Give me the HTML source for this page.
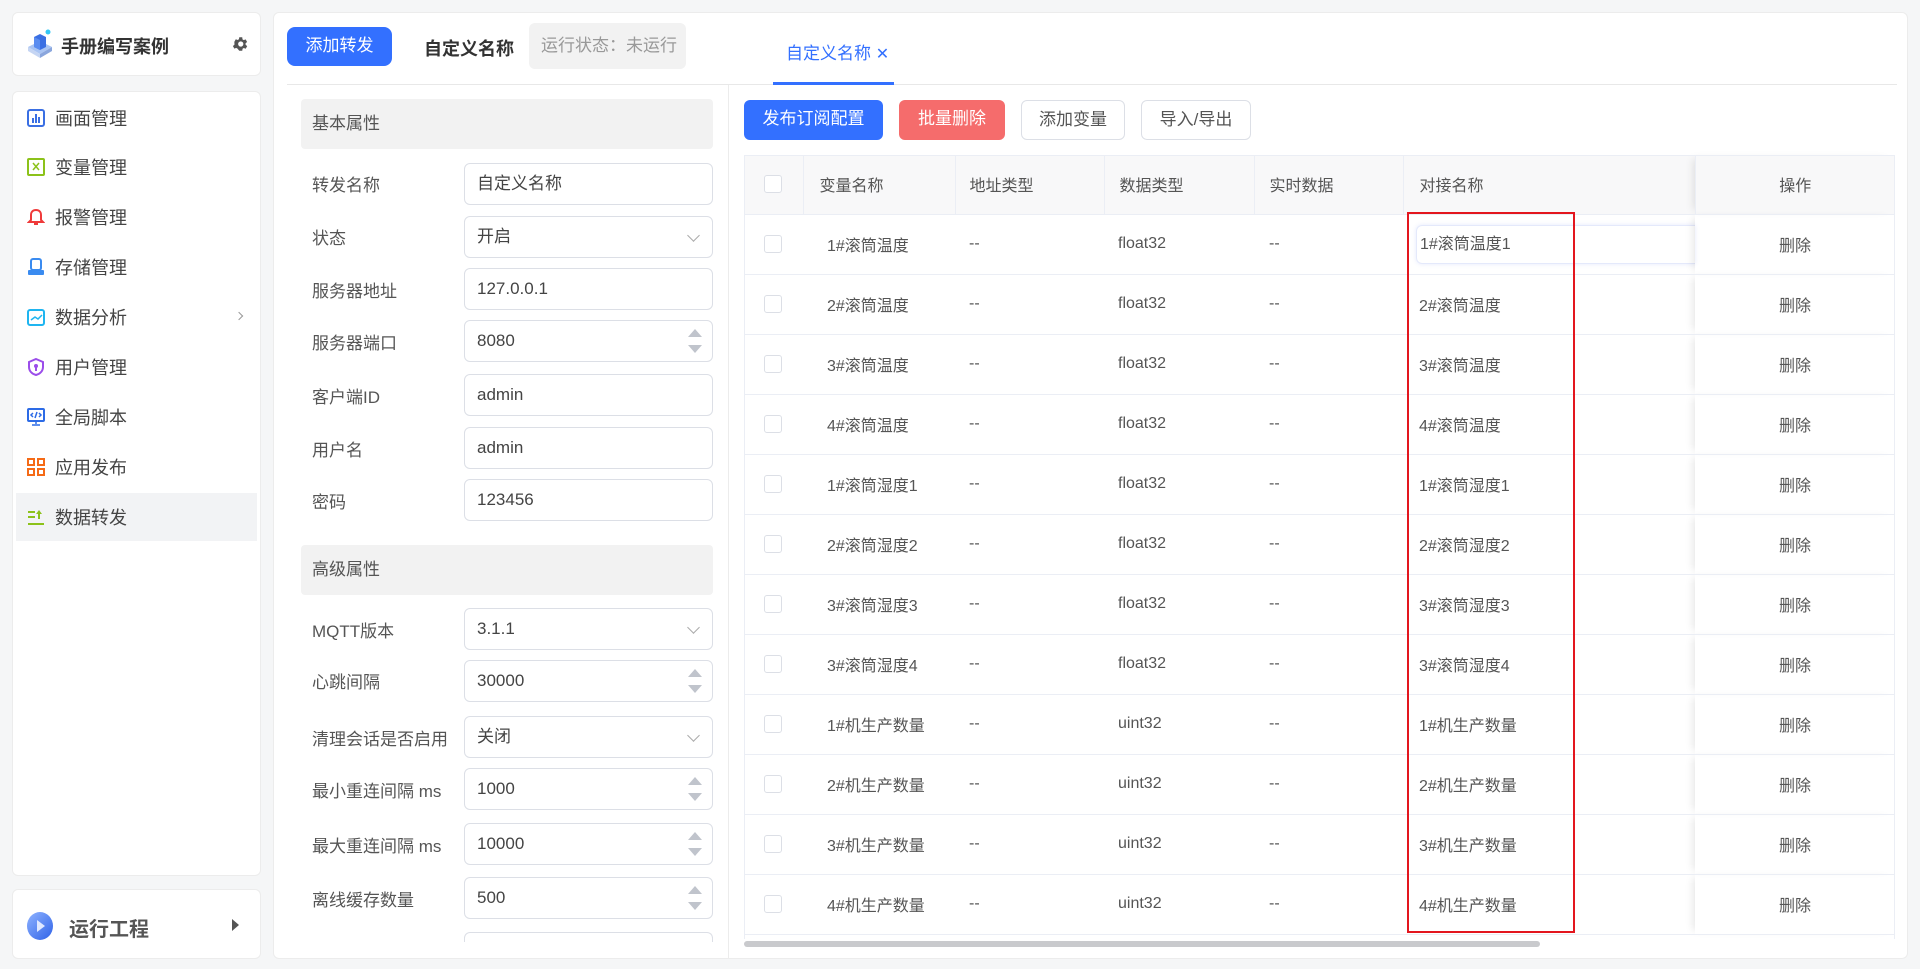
<!DOCTYPE html>
<html><head><meta charset="utf-8"><style>
*{box-sizing:border-box;margin:0;padding:0}
body{width:1920px;height:969px;background:#f5f6f7;font-family:"Liberation Sans","Noto Sans CJK SC",sans-serif;color:#555;position:relative;overflow:hidden;font-size:17px}
.a{position:absolute}
.card{position:absolute;background:#fff;border:1px solid #ececec;border-radius:6px}
.nav{position:absolute;left:16px;width:241px;height:48px;display:flex;align-items:center;font-size:18px;color:#444}
.nav svg{position:absolute;left:11px}
.nav span{position:absolute;left:39px}
.lbl{position:absolute;left:312px;font-size:17px;color:#555}
.inp{position:absolute;left:464px;width:249px;height:42px;border:1px solid #dcdfe6;border-radius:6px;padding-left:12px;line-height:40px;font-size:17px;color:#444}
.sec{position:absolute;left:301px;width:412px;height:50px;background:#f2f2f2;border-radius:4px;padding-left:11px;line-height:50px;font-size:17px;color:#555}
.chev{position:absolute;right:14px;top:14px;width:9px;height:9px;border-right:1.5px solid #aaa;border-bottom:1.5px solid #aaa;transform:rotate(45deg)}
.spin{position:absolute;right:10px;top:8px;width:0;height:0;border-left:7px solid transparent;border-right:7px solid transparent;border-bottom:8px solid #c0c4cc}
.spin2{position:absolute;right:10px;top:24px;width:0;height:0;border-left:7px solid transparent;border-right:7px solid transparent;border-top:8px solid #c0c4cc}
.btn{position:absolute;top:100px;height:40px;border-radius:6px;line-height:38px;text-align:center;font-size:17px}
table{position:absolute;left:744px;top:155px;width:1151px;border-collapse:collapse;font-size:16px;color:#555}
td,th{height:60px;border-bottom:1px solid #ebeef5;font-weight:normal;text-align:left}
th{background:#f8f8f9;height:59px;border-right:1px solid #ebeef5}
.cb{display:inline-block;width:18px;height:18px;border:1px solid #dcdfe6;border-radius:3px;margin-left:20px;vertical-align:middle;background:#fff}
</style></head><body>

<div class="card" style="left:12px;top:12px;width:249px;height:64px">
<svg class="a" style="left:12px;top:16px" width="30" height="32" viewBox="0 0 30 32"><polygon points="15,12 27,18 15,25 3,18" fill="#a9c4f3"/><polygon points="15,25 27,18 27,22 15,29" fill="#8aa6dd"/><polygon points="3,18 15,25 15,29 3,22" fill="#c5d5f3"/><polygon points="9,8 15,5 21,8 21,18 15,21 9,18" fill="#3a6fe3"/><polygon points="9,8 15,11 15,21 9,18" fill="#5a8cf0"/><circle cx="23" cy="3" r="2.5" fill="#34c8f5"/></svg>
<div class="a" style="left:48px;top:20px;font-size:18px;font-weight:bold;color:#333">手册编写案例</div>
<svg class="a" style="left:218px;top:22px" width="18" height="18" viewBox="0 0 24 24"><path fill="#555" d="M19.4 13a7.5 7.5 0 000-2l2.1-1.6-2-3.5-2.5 1a7 7 0 00-1.7-1L15 3h-4l-.4 2.7a7 7 0 00-1.7 1l-2.5-1-2 3.5L4.6 11a7.5 7.5 0 000 2l-2.1 1.6 2 3.5 2.5-1a7 7 0 001.7 1L11 21h4l.4-2.7a7 7 0 001.7-1l2.5 1 2-3.5zM13 15.5a3.5 3.5 0 110-7 3.5 3.5 0 010 7z"/></svg>
</div>

<div class="card" style="left:12px;top:91px;width:249px;height:785px"></div>
<div class="nav" style="top:94px"><svg width="18" height="18" viewBox="0 0 18 18"><rect x="1" y="1" width="16" height="16" rx="2" fill="none" stroke="#3a6fe3" stroke-width="2"/><rect x="5" y="9" width="2" height="5" fill="#3a6fe3"/><rect x="8" y="5" width="2" height="9" fill="#3a6fe3"/><rect x="11" y="8" width="2" height="6" fill="#3a6fe3"/></svg><span>画面管理</span></div>
<div class="nav" style="top:143px"><svg width="18" height="18" viewBox="0 0 18 18"><rect x="1" y="1" width="16" height="16" rx="1" fill="none" stroke="#8cc21a" stroke-width="2"/><path d="M6 5l6 7M12 5l-6 7" stroke="#8cc21a" stroke-width="1.5"/></svg><span>变量管理</span></div>
<div class="nav" style="top:193px"><svg width="18" height="18" viewBox="0 0 18 18"><path d="M9 2c-3 0-5 2-5 5v5l-2 2h14l-2-2V7c0-3-2-5-5-5zM7 16h4" fill="none" stroke="#ef3a3a" stroke-width="2"/></svg><span>报警管理</span></div>
<div class="nav" style="top:243px"><svg width="18" height="18" viewBox="0 0 18 18"><rect x="4" y="1" width="10" height="11" rx="2" fill="none" stroke="#3a8bf0" stroke-width="2"/><rect x="1" y="12" width="16" height="5" rx="1" fill="#3a8bf0"/></svg><span>存储管理</span></div>
<div class="nav" style="top:293px"><svg width="18" height="18" viewBox="0 0 18 18"><rect x="1" y="2" width="16" height="15" rx="2" fill="none" stroke="#1fb5f0" stroke-width="2"/><path d="M4 12l4-3 3 2 4-4" fill="none" stroke="#1fb5f0" stroke-width="1.5"/></svg><span>数据分析</span><div class="a" style="left:220px;top:20px;width:6px;height:6px;border-right:1.5px solid #999;border-top:1.5px solid #999;transform:rotate(45deg)"></div></div>
<div class="nav" style="top:343px"><svg width="18" height="18" viewBox="0 0 18 18"><path d="M9 1l7 3v5c0 4-3 7-7 8-4-1-7-4-7-8V4z" fill="none" stroke="#9b4dea" stroke-width="2"/><circle cx="9" cy="8" r="2" fill="#9b4dea"/><rect x="8" y="9" width="2" height="4" fill="#9b4dea"/></svg><span>用户管理</span></div>
<div class="nav" style="top:393px"><svg width="18" height="18" viewBox="0 0 18 18"><rect x="1" y="1" width="16" height="12" rx="1" fill="none" stroke="#2d6be6" stroke-width="2"/><path d="M6 5l-2 2 2 2M12 5l2 2-2 2M10 4l-2 6M9 13v3M5 17h8" fill="none" stroke="#2d6be6" stroke-width="1.5"/></svg><span>全局脚本</span></div>
<div class="nav" style="top:443px"><svg width="18" height="18" viewBox="0 0 18 18"><g fill="none" stroke="#f56a16" stroke-width="2"><rect x="1" y="1" width="6" height="6"/><rect x="11" y="1" width="6" height="6"/><rect x="1" y="11" width="6" height="6"/><rect x="11" y="11" width="6" height="6"/></g></svg><span>应用发布</span></div>
<div class="nav" style="top:493px;background:#f2f3f5"><svg width="18" height="18" viewBox="0 0 18 18"><path d="M1 4h7M1 9h7M1 16h16" stroke="#8cc21a" stroke-width="2"/><path d="M12 2l-3 4h2v5h2V6h2z" fill="#8cc21a"/></svg><span>数据转发</span></div>

<div class="card" style="left:12px;top:889px;width:249px;height:70px">
<div class="a" style="left:14px;top:22px;width:26px;height:28px;border-radius:50%;background:linear-gradient(135deg,#8fb3ff,#2f62e8)"></div>
<div class="a" style="left:24px;top:30px;width:0;height:0;border-top:6px solid transparent;border-bottom:6px solid transparent;border-left:8px solid #dfe8ff"></div>
<div class="a" style="left:56px;top:23px;font-size:20px;font-weight:bold;color:#555">运行工程</div>
<div class="a" style="left:219px;top:29px;width:0;height:0;border-top:6px solid transparent;border-bottom:6px solid transparent;border-left:7px solid #555"></div>
</div>

<div class="card" style="left:273px;top:12px;width:1635px;height:947px"></div>
<div class="btn" style="left:287px;top:27px;width:105px;height:39px;background:#3370ff;color:#fff;border-radius:8px">添加转发</div>
<div class="a" style="left:424px;top:35px;font-size:18px;font-weight:bold;color:#333">自定义名称</div>
<div class="a" style="left:529px;top:23px;width:157px;height:46px;background:#f2f2f2;border-radius:6px;line-height:46px;padding-left:12px;color:#999;font-size:17px">运行状态：未运行</div>
<div class="a" style="left:287px;top:84px;width:1610px;height:1px;background:#e8e8e8"></div>
<div class="a" style="left:786px;top:39px;color:#3370ff;font-size:17px">自定义名称 <span style="font-size:16px">✕</span></div>
<div class="a" style="left:773px;top:82px;width:121px;height:3px;background:#3370ff"></div>
<div class="a" style="left:728px;top:85px;width:1px;height:874px;background:#ececec"></div>

<div class="sec" style="top:99px">基本属性</div>
<div class="lbl" style="top:171px">转发名称</div><div class="inp" style="top:163px">自定义名称</div>
<div class="lbl" style="top:224px">状态</div><div class="inp" style="top:216px">开启<div class="chev"></div></div>
<div class="lbl" style="top:277px">服务器地址</div><div class="inp" style="top:268px">127.0.0.1</div>
<div class="lbl" style="top:329px">服务器端口</div><div class="inp" style="top:320px">8080<div class="spin"></div><div class="spin2"></div></div>
<div class="lbl" style="top:383px">客户端ID</div><div class="inp" style="top:374px">admin</div>
<div class="lbl" style="top:436px">用户名</div><div class="inp" style="top:427px">admin</div>
<div class="lbl" style="top:488px">密码</div><div class="inp" style="top:479px">123456</div>
<div class="sec" style="top:545px">高级属性</div>
<div class="lbl" style="top:617px">MQTT版本</div><div class="inp" style="top:608px">3.1.1<div class="chev"></div></div>
<div class="lbl" style="top:668px">心跳间隔</div><div class="inp" style="top:660px">30000<div class="spin"></div><div class="spin2"></div></div>
<div class="lbl" style="top:725px">清理会话是否启用</div><div class="inp" style="top:716px">关闭<div class="chev"></div></div>
<div class="lbl" style="top:777px">最小重连间隔 ms</div><div class="inp" style="top:768px">1000<div class="spin"></div><div class="spin2"></div></div>
<div class="lbl" style="top:832px">最大重连间隔 ms</div><div class="inp" style="top:823px">10000<div class="spin"></div><div class="spin2"></div></div>
<div class="lbl" style="top:886px">离线缓存数量</div><div class="inp" style="top:877px">500<div class="spin"></div><div class="spin2"></div></div>
<div class="a" style="left:464px;top:932px;width:249px;height:10px;border:1px solid #dcdfe6;border-bottom:none;border-radius:6px 6px 0 0"></div>

<div class="btn" style="left:744px;width:139px;background:#3370ff;color:#fff">发布订阅配置</div>
<div class="btn" style="left:899px;width:106px;background:#f56c6c;color:#fff">批量删除</div>
<div class="btn" style="left:1021px;width:104px;border:1px solid #dcdfe6;color:#555">添加变量</div>
<div class="btn" style="left:1141px;width:110px;border:1px solid #dcdfe6;color:#555">导入/导出</div>

<table>
<colgroup><col style="width:59px"><col style="width:152px"><col style="width:149px"><col style="width:150px"><col style="width:149px"><col style="width:292px"><col style="width:200px"></colgroup>
<tr><th><span class="cb"></span></th><th style="padding-left:16px">变量名称</th><th style="padding-left:14px">地址类型</th><th style="padding-left:15px">数据类型</th><th style="padding-left:15px">实时数据</th><th style="padding-left:16px">对接名称</th><th style="text-align:center;border-right:none;box-shadow:-6px 0 8px -4px rgba(0,0,0,.1)">操作</th></tr>
<tr><td><span class="cb"></span></td><td style="padding-left:24px">1#滚筒温度</td><td style="padding-left:14px">--</td><td style="padding-left:14px">float32</td><td style="padding-left:15px">--</td><td style="padding-left:13px"><div style="width:279px;height:39px;border:1px solid #e4e9fb;border-right:none;border-radius:6px 0 0 6px;box-shadow:0 0 5px rgba(80,110,240,.15);line-height:37px;padding-left:3px">1#滚筒温度1</div></td><td style="text-align:center;box-shadow:-6px 0 8px -4px rgba(0,0,0,.1)">删除</td></tr>
<tr><td><span class="cb"></span></td><td style="padding-left:24px">2#滚筒温度</td><td style="padding-left:14px">--</td><td style="padding-left:14px">float32</td><td style="padding-left:15px">--</td><td style="padding-left:16px">2#滚筒温度</td><td style="text-align:center;box-shadow:-6px 0 8px -4px rgba(0,0,0,.1)">删除</td></tr>
<tr><td><span class="cb"></span></td><td style="padding-left:24px">3#滚筒温度</td><td style="padding-left:14px">--</td><td style="padding-left:14px">float32</td><td style="padding-left:15px">--</td><td style="padding-left:16px">3#滚筒温度</td><td style="text-align:center;box-shadow:-6px 0 8px -4px rgba(0,0,0,.1)">删除</td></tr>
<tr><td><span class="cb"></span></td><td style="padding-left:24px">4#滚筒温度</td><td style="padding-left:14px">--</td><td style="padding-left:14px">float32</td><td style="padding-left:15px">--</td><td style="padding-left:16px">4#滚筒温度</td><td style="text-align:center;box-shadow:-6px 0 8px -4px rgba(0,0,0,.1)">删除</td></tr>
<tr><td><span class="cb"></span></td><td style="padding-left:24px">1#滚筒湿度1</td><td style="padding-left:14px">--</td><td style="padding-left:14px">float32</td><td style="padding-left:15px">--</td><td style="padding-left:16px">1#滚筒湿度1</td><td style="text-align:center;box-shadow:-6px 0 8px -4px rgba(0,0,0,.1)">删除</td></tr>
<tr><td><span class="cb"></span></td><td style="padding-left:24px">2#滚筒湿度2</td><td style="padding-left:14px">--</td><td style="padding-left:14px">float32</td><td style="padding-left:15px">--</td><td style="padding-left:16px">2#滚筒湿度2</td><td style="text-align:center;box-shadow:-6px 0 8px -4px rgba(0,0,0,.1)">删除</td></tr>
<tr><td><span class="cb"></span></td><td style="padding-left:24px">3#滚筒湿度3</td><td style="padding-left:14px">--</td><td style="padding-left:14px">float32</td><td style="padding-left:15px">--</td><td style="padding-left:16px">3#滚筒湿度3</td><td style="text-align:center;box-shadow:-6px 0 8px -4px rgba(0,0,0,.1)">删除</td></tr>
<tr><td><span class="cb"></span></td><td style="padding-left:24px">3#滚筒湿度4</td><td style="padding-left:14px">--</td><td style="padding-left:14px">float32</td><td style="padding-left:15px">--</td><td style="padding-left:16px">3#滚筒湿度4</td><td style="text-align:center;box-shadow:-6px 0 8px -4px rgba(0,0,0,.1)">删除</td></tr>
<tr><td><span class="cb"></span></td><td style="padding-left:24px">1#机生产数量</td><td style="padding-left:14px">--</td><td style="padding-left:14px">uint32</td><td style="padding-left:15px">--</td><td style="padding-left:16px">1#机生产数量</td><td style="text-align:center;box-shadow:-6px 0 8px -4px rgba(0,0,0,.1)">删除</td></tr>
<tr><td><span class="cb"></span></td><td style="padding-left:24px">2#机生产数量</td><td style="padding-left:14px">--</td><td style="padding-left:14px">uint32</td><td style="padding-left:15px">--</td><td style="padding-left:16px">2#机生产数量</td><td style="text-align:center;box-shadow:-6px 0 8px -4px rgba(0,0,0,.1)">删除</td></tr>
<tr><td><span class="cb"></span></td><td style="padding-left:24px">3#机生产数量</td><td style="padding-left:14px">--</td><td style="padding-left:14px">uint32</td><td style="padding-left:15px">--</td><td style="padding-left:16px">3#机生产数量</td><td style="text-align:center;box-shadow:-6px 0 8px -4px rgba(0,0,0,.1)">删除</td></tr>
<tr><td><span class="cb"></span></td><td style="padding-left:24px">4#机生产数量</td><td style="padding-left:14px">--</td><td style="padding-left:14px">uint32</td><td style="padding-left:15px">--</td><td style="padding-left:16px">4#机生产数量</td><td style="text-align:center;box-shadow:-6px 0 8px -4px rgba(0,0,0,.1)">删除</td></tr>
</table>
<div class="a" style="left:744px;top:155px;width:1151px;height:784px;border:1px solid #ebeef5;border-bottom:none;pointer-events:none"></div>
<div class="a" style="left:744px;top:941px;width:796px;height:6px;background:#c9cacd;border-radius:3px"></div>
<div class="a" style="left:1407px;top:212px;width:168px;height:721px;border:2px solid #e3161e"></div>
</body></html>
